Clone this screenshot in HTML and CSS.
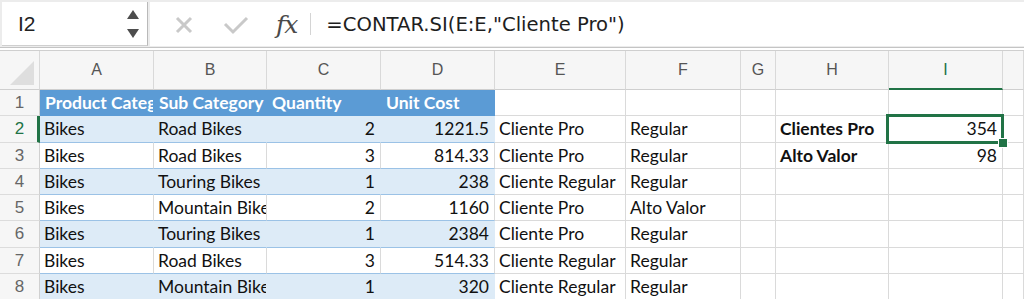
FILE: index.html
```html
<!DOCTYPE html>
<html lang="es">
<head>
    <meta charset="UTF-8">
    <meta name="viewport" content="width=device-width, initial-scale=1.0">
    <title>CONTAR.SI</title>
    <link rel="stylesheet" href="styles.css">
</head>
<body>
    <div class="toolbar">
        <div class="name-box">
            <span class="name-ref">I2</span>
            <div class="name-arrows">
                <svg width="12" height="9" viewBox="0 0 12 9"><polygon points="6,0 12,9 0,9" fill="#4d4d4d"/></svg>
                <svg width="12" height="9" viewBox="0 0 12 9"><polygon points="0,0 12,0 6,9" fill="#4d4d4d"/></svg>
            </div>
        </div>
        <div class="formula-bar">
            <svg class="fb-icon" width="20" height="20" viewBox="0 0 20 20"><path d="M3 3 L17 17 M17 3 L3 17" stroke="#c9c9c9" stroke-width="3" fill="none"/></svg>
            <svg class="fb-icon check" width="26" height="20" viewBox="0 0 26 20"><path d="M2 9 L10 17 L24 3" stroke="#c9c9c9" stroke-width="3" fill="none"/></svg>
            <span class="fx">fx</span>
            <span class="fb-sep"></span>
            <span class="formula">=CONTAR.SI(E:E,"Cliente Pro")</span>
        </div>
    </div>

    <div class="sheet">
        <!-- column headers -->
        <div class="ch corner"><span class="tri"></span></div>
        <div class="ch">A</div>
        <div class="ch">B</div>
        <div class="ch">C</div>
        <div class="ch">D</div>
        <div class="ch">E</div>
        <div class="ch">F</div>
        <div class="ch">G</div>
        <div class="ch">H</div>
        <div class="ch active">I</div>
        <div class="ch"></div>

        <!-- row 1 -->
        <div class="rh">1</div>
        <div class="c th">Product Category</div>
        <div class="c th">Sub Category</div>
        <div class="c th">Quantity</div>
        <div class="c th">Unit Cost</div>
        <div class="c"></div><div class="c"></div><div class="c"></div><div class="c"></div><div class="c"></div><div class="c"></div>

        <!-- row 2 -->
        <div class="rh active">2</div>
        <div class="c band">Bikes</div>
        <div class="c band">Road Bikes</div>
        <div class="c band num">2</div>
        <div class="c band num">1221.5</div>
        <div class="c">Cliente Pro</div>
        <div class="c">Regular</div>
        <div class="c"></div>
        <div class="c bold">Clientes Pro</div>
        <div class="c num selected">354<span class="sel-box"><span class="handle"></span></span></div>
        <div class="c"></div>

        <!-- row 3 -->
        <div class="rh">3</div>
        <div class="c plain">Bikes</div>
        <div class="c plain">Road Bikes</div>
        <div class="c plain num">3</div>
        <div class="c plain num">814.33</div>
        <div class="c">Cliente Pro</div>
        <div class="c">Regular</div>
        <div class="c"></div>
        <div class="c bold">Alto Valor</div>
        <div class="c num">98</div>
        <div class="c"></div>

        <!-- row 4 -->
        <div class="rh">4</div>
        <div class="c band">Bikes</div>
        <div class="c band">Touring Bikes</div>
        <div class="c band num">1</div>
        <div class="c band num">238</div>
        <div class="c">Cliente Regular</div>
        <div class="c">Regular</div>
        <div class="c"></div><div class="c"></div><div class="c"></div><div class="c"></div>

        <!-- row 5 -->
        <div class="rh">5</div>
        <div class="c plain">Bikes</div>
        <div class="c plain">Mountain Bikes</div>
        <div class="c plain num">2</div>
        <div class="c plain num">1160</div>
        <div class="c">Cliente Pro</div>
        <div class="c">Alto Valor</div>
        <div class="c"></div><div class="c"></div><div class="c"></div><div class="c"></div>

        <!-- row 6 -->
        <div class="rh">6</div>
        <div class="c band">Bikes</div>
        <div class="c band">Touring Bikes</div>
        <div class="c band num">1</div>
        <div class="c band num">2384</div>
        <div class="c">Cliente Pro</div>
        <div class="c">Regular</div>
        <div class="c"></div><div class="c"></div><div class="c"></div><div class="c"></div>

        <!-- row 7 -->
        <div class="rh">7</div>
        <div class="c plain">Bikes</div>
        <div class="c plain">Road Bikes</div>
        <div class="c plain num">3</div>
        <div class="c plain num">514.33</div>
        <div class="c">Cliente Regular</div>
        <div class="c">Regular</div>
        <div class="c"></div><div class="c"></div><div class="c"></div><div class="c"></div>

        <!-- row 8 -->
        <div class="rh">8</div>
        <div class="c band">Bikes</div>
        <div class="c band">Mountain Bikes</div>
        <div class="c band num">1</div>
        <div class="c band num">320</div>
        <div class="c">Cliente Regular</div>
        <div class="c">Regular</div>
        <div class="c"></div><div class="c"></div><div class="c"></div><div class="c"></div>
    </div>
</body>
</html>
```

FILE: styles.css
```css
* {
    margin: 0;
    padding: 0;
    box-sizing: border-box;
}

body {
    width: 1024px;
    height: 299px;
    overflow: hidden;
    background: #fff;
    font-family: Lato, "Open Sans", sans-serif;
}

/* formula toolbar */
.toolbar {
    display: flex;
    gap: 2px;
    height: 48px;
    padding: 2px 0 1px 2px;
    background: #ececec;
    border-bottom: 1px solid #c4c4c4;
}

.name-box {
    width: 146px;
    display: flex;
    align-items: center;
    justify-content: space-between;
    padding: 0 8px 0 16px;
    background: #fff;
    border-right: 1px solid #b9b9b9;
    border-bottom: 1px solid #cfcfcf;
}

.name-ref {
    font-family: "Liberation Sans", sans-serif;
    font-size: 21px;
    color: #222;
}

.name-arrows {
    display: flex;
    flex-direction: column;
    gap: 10px;
}

.name-arrows svg {
    display: block;
}

.formula-bar {
    flex: 1;
    display: flex;
    align-items: center;
    background: #fff;
    padding-left: 24px;
}

.fb-icon {
    display: block;
    margin-top: 1px;
}

.fb-icon.check {
    margin-left: 29px;
}

.fx {
    margin-left: 27px;
    font-family: "DejaVu Serif", "Liberation Serif", serif;
    font-style: italic;
    font-size: 25px;
    color: #4a4a4a;
    letter-spacing: -1px;
}

.fb-sep {
    width: 1px;
    height: 22px;
    margin-left: 13px;
    background: #d4d4d4;
}

.formula {
    margin-left: 15px;
    font-family: "DejaVu Sans", sans-serif;
    font-size: 19.6px;
    color: #1e1e1e;
}

/* grid */
.sheet {
    display: grid;
    grid-template-columns: 40px 114px 113px 114px 114px 131px 115px 35px 113px 114px 1fr;
    grid-template-rows: 39px repeat(8, 26.3px);
    margin-top: 2px;
    border-top: 1px solid #cfcfcf;
    font-size: 17.5px;
    color: #111;
}

.ch {
    display: flex;
    align-items: center;
    justify-content: center;
    background: #f6f6f6;
    border-right: 1px solid #d9d9d9;
    border-bottom: 1px solid #cfcfcf;
    font-family: "Liberation Sans", sans-serif;
    font-size: 16px;
    color: #555;
}

.ch.active {
    color: #217346;
    border-bottom: 2px solid #217346;
}

.corner {
    position: relative;
}

.tri {
    position: absolute;
    right: 5px;
    bottom: 4px;
    width: 0;
    height: 0;
    border-left: 24px solid transparent;
    border-bottom: 24px solid #dedede;
}

.rh {
    background: #f6f6f6;
    border-right: 1px solid #d0d0d0;
    border-bottom: 1px solid #dcdcdc;
    text-align: center;
    line-height: 26px;
    font-family: "Liberation Sans", sans-serif;
    font-size: 17px;
    color: #666;
}

.rh.active {
    color: #217346;
    border-right: 3px solid #217346;
    padding-left: 2px;
}

.c {
    padding: 0 5px 0 4px;
    border-right: 1px solid #dadada;
    border-bottom: 1px solid #dadada;
    line-height: 26px;
    white-space: nowrap;
    overflow: hidden;
    text-overflow: clip;
}

.num {
    text-align: right;
}

.bold {
    font-weight: bold;
}

.th {
    background: #5b9bd5;
    color: #fff;
    font-weight: bold;
    border-right-color: #5b9bd5;
    border-bottom-color: #5b9bd5;
    padding-left: 5px;
}

.band {
    background: #ddebf7;
    border-right-color: #ddebf7;
    border-bottom-color: #9bc2e6;
}

.plain {
    border-bottom-color: #9bc2e6;
}

.c.selected {
    position: relative;
    overflow: visible;
}

.sel-box {
    position: absolute;
    left: -3px;
    top: -2px;
    width: 118px;
    height: 30px;
    border: 3px solid #217346;
}

.handle {
    position: absolute;
    right: -7px;
    bottom: -7px;
    width: 10px;
    height: 10px;
    background: #217346;
    border: 1px solid #fff;
}
```
